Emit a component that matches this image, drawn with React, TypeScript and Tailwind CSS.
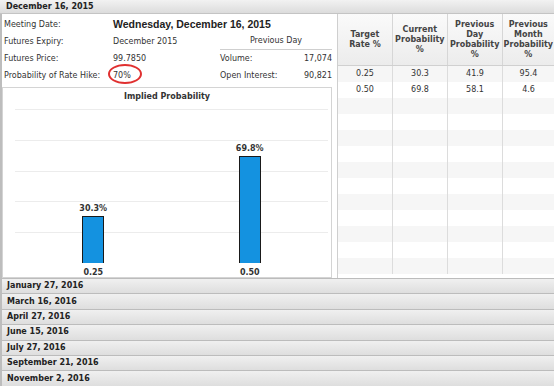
import React from 'react';

const meetings = [
  'January 27, 2016',
  'March 16, 2016',
  'April 27, 2016',
  'June 15, 2016',
  'July 27, 2016',
  'September 21, 2016',
  'November 2, 2016',
];

const rows = [
  ['0.25', '30.3', '41.9', '95.4'],
  ['0.50', '69.8', '58.1', '4.6'],
];

const bars = [
  { label: '0.25', value: 30.3 },
  { label: '0.50', value: 69.8 },
];

function Chart() {
  const plotH = 154;
  return (
    <div className="mt-[3px] w-[330px] h-[191px] border border-[#d4d4d4] bg-white flex flex-col">
      <div className="h-[21px] pt-[3px] text-center font-bold text-[8px] text-[#333]">Implied Probability</div>
      <div className="relative ml-[12px] mr-[3px] h-[154px]">
        {[0, 1, 2, 3, 4].map((i) => (
          <div key={i} className="absolute left-0 right-0 border-t border-[#ececec]" style={{ top: i * 30.8 }} />
        ))}
        <div className="absolute inset-0 flex">
          {bars.map((b) => (
            <div key={b.label} className="flex-1 flex flex-col items-center justify-end">
              <div className="text-[8px] font-bold text-[#333] leading-none mb-[3px]">{b.value}%</div>
              <div
                className="w-[22px] bg-[#1492e0] border border-[#1a1a1a] border-b-0"
                style={{ height: (b.value / 100) * plotH }}
              />
            </div>
          ))}
        </div>
      </div>
      <div className="ml-[12px] mr-[3px] flex pt-[6px]">
        {bars.map((b) => (
          <div key={b.label} className="flex-1 text-center text-[8px] font-bold text-[#333] leading-none">
            {b.label}
          </div>
        ))}
      </div>
    </div>
  );
}

export default function App() {
  return (
    <div
      className="w-[554px] h-[388px] overflow-hidden bg-white text-[#333] text-[8px]"
      style={{ fontFamily: '"DejaVu Sans", Verdana, sans-serif' }}
    >
      <div className="h-[14px] border-b border-[#c4c4c4] bg-gradient-to-b from-[#f2f2f2] to-[#dcdcdc] pl-[6px] flex items-center font-bold text-[#222]">
        December 16, 2015
      </div>
      <div className="flex h-[264px] border-l-2 border-[#bdbdbd]">
        <div className="w-[335px] flex flex-col">
          <div className="pt-[3px] pl-[2px] pr-[5px]">
            <div className="flex items-center h-[16px]">
              <div className="w-[109px]">Meeting Date:</div>
              <div
                className="text-[10.5px] font-bold text-[#222]"
                style={{ fontFamily: '"Liberation Sans", Arial, sans-serif' }}
              >
                Wednesday, December 16, 2015
              </div>
            </div>
            <div className="flex items-center h-[17px]">
              <div className="w-[109px]">Futures Expiry:</div>
              <div className="w-[107px]">December 2015</div>
              <div className="flex-1 h-full flex items-center justify-center border-b border-[#cfcfcf]">Previous Day</div>
            </div>
            <div className="flex items-center h-[17px]">
              <div className="w-[109px]">Futures Price:</div>
              <div className="w-[107px]">99.7850</div>
              <div className="flex-1 flex justify-between">
                <span>Volume:</span>
                <span>17,074</span>
              </div>
            </div>
            <div className="flex items-center h-[17px]">
              <div className="w-[109px]">Probability of Rate Hike:</div>
              <div className="w-[107px]">
                <span className="relative inline-block">
                  70%
                  <span className="absolute left-[-5px] top-[-6px] w-[34px] h-[20px] rounded-[50%] border-2 border-[#e03030]" />
                </span>
              </div>
              <div className="flex-1 flex justify-between">
                <span>Open Interest:</span>
                <span>90,821</span>
              </div>
            </div>
          </div>
          <Chart />
        </div>
        <div className="flex-1 flex flex-col border-l border-[#cfcfcf] overflow-hidden">
          <div className="h-[52px] shrink-0 flex border-b border-[#d0d0d0] bg-gradient-to-b from-[#fafafa] to-[#ececec] font-bold text-[#444]">
            {['Target Rate %', 'Current Probability %', 'Previous Day Probability %', 'Previous Month Probability %'].map(
              (h, i) => (
                <div
                  key={h}
                  className={`flex items-center justify-center text-center leading-[10px] px-[1px] ${
                    i < 3 ? 'w-[55px] border-r border-[#d6d6d6]' : 'flex-1'
                  }`}
                >
                  {h}
                </div>
              )
            )}
          </div>
          {Array.from({ length: 13 }).map((_, r) => (
            <div key={r} className={`h-[16px] flex shrink-0 ${r % 2 === 0 ? 'bg-[#f6f6f6]' : 'bg-white'}`}>
              {[0, 1, 2, 3].map((c) => (
                <div
                  key={c}
                  className={`flex items-center justify-center ${
                    c < 3 ? 'w-[55px] border-r border-[#dcdcdc]' : 'flex-1'
                  }`}
                >
                  {rows[r] ? rows[r][c] : ''}
                </div>
              ))}
            </div>
          ))}
        </div>
      </div>
      <div className="border-l-2 border-[#bdbdbd]">
        {meetings.map((m) => (
          <div
            key={m}
            className="h-[15.4px] border-t border-[#bcbcbc] bg-gradient-to-b from-[#f0f0f0] to-[#dedede] pl-[5px] flex items-center font-bold text-[#222]"
          >
            {m}
          </div>
        ))}
      </div>
    </div>
  );
}
